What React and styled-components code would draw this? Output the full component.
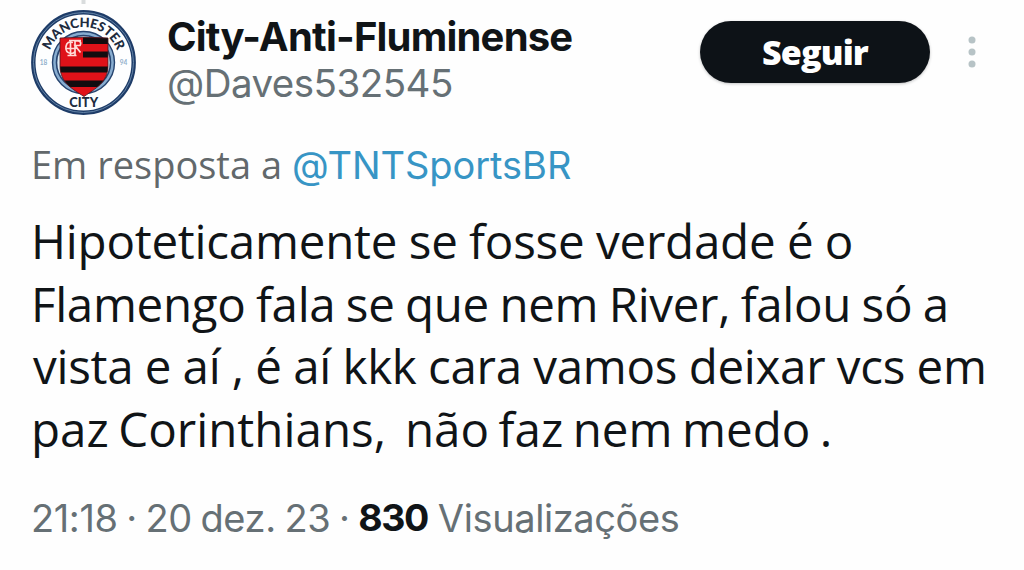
import React from "react";
import styled, { createGlobalStyle } from "styled-components";

const Global = createGlobalStyle`
  body { margin: 0; background: #fefefe; }
  * { box-sizing: border-box; }
`;

const Post = styled.article`
  width: 1024px;
  height: 570px;
  padding: 0 32px 0 31px;
  overflow: hidden;
  background: #fefefe;
  color: #101417;
  font-family: "Open Sans", "Noto Sans", sans-serif;
`;

const Header = styled.header`
  display: flex;
  align-items: flex-start;
  height: 140px;
`;

const Avatar = styled.svg`
  flex: none;
  display: block;
  width: 105px;
  height: 116px;
`;

const Identity = styled.div`
  flex: 1;
  padding: 13px 0 0 31px;
  font-family: Inter, sans-serif;
  white-space: nowrap;
`;

const Name = styled.div`
  font-size: 40px;
  font-weight: 700;
  line-height: 47px;
  letter-spacing: -0.79px;
`;

const Handle = styled.div`
  font-size: 38.5px;
  line-height: 47px;
  letter-spacing: -0.52px;
  color: #667075;
`;

const FollowButton = styled.button`
  width: 230px;
  height: 62px;
  margin-top: 21px;
  padding: 0 0 1px;
  border: 0;
  border-radius: 31px;
  background: #0d1217;
  box-shadow: 0 1px 3px rgba(15, 20, 25, 0.25);
  color: #fff;
  font: 800 34px/60px "Open Sans", sans-serif;
  letter-spacing: -0.85px;
`;

const MenuDots = styled.svg`
  width: 8px;
  height: 32px;
  margin: 36px 16px 0 38px;
  fill: #b7c3c6;
`;

const ReplyLine = styled.div`
  height: 48px;
  font-size: 38px;
  line-height: 48px;
  white-space: nowrap;
  color: #62686b;
`;

const Mention = styled.a`
  font-family: Inter, sans-serif;
  letter-spacing: -0.05px;
  color: #3795c5;
`;

const Body = styled.div`
  margin-top: 22px;
`;

const Line = styled.div`
  height: 62.7px;
  padding-left: ${(p) => p.$indent}px;
  font-size: 47.5px;
  line-height: 62.7px;
  letter-spacing: ${(p) => p.$track}px;
  word-spacing: ${(p) => p.$gap}px;
  white-space: pre;
`;

const Meta = styled.footer`
  display: flex;
  height: 48px;
  margin-top: 33px;
  font-family: Inter, sans-serif;
  font-size: 38px;
  line-height: 48px;
  letter-spacing: -0.4px;
  word-spacing: -1.6px;
  white-space: pre;
  color: #667075;
`;

const Views = styled.strong`
  margin-right: 10px;
  font-size: 37.5px;
  font-weight: 700;
  letter-spacing: -1.4px;
  color: #101417;
`;

const lines = [
  { text: "Hipoteticamente se fosse verdade é o", track: -0.23, gap: -0.6, indent: 0 },
  { text: "Flamengo fala se que nem River, falou só a", track: -0.33, gap: -1.5, indent: 0 },
  { text: "vista e aí , é aí kkk cara vamos deixar vcs em", track: -0.28, gap: -0.6, indent: 2 },
  { text: "paz Corinthians,  não faz nem medo .", track: 0.02, gap: -2.9, indent: 0 },
];

function Crest() {
  return (
    <Avatar viewBox="31 0 105 116">
      <defs>
        <path id="arc" d="M 48 62.5 A 35.5 35.5 0 0 1 119 62.5" />
        <clipPath id="shield">
          <path d="M60 38 Q84 36.5 108 38 V66 C108 82 95 89 84 96.5 C72 89 60 82 60 66 Z" />
        </clipPath>
      </defs>
      <path d="M83.5 0v4" stroke="#d9dcdd" strokeWidth="4" />
      <circle cx="83.5" cy="62.5" r="50.2" fill="#fdfeff" stroke="#1e3c68" strokeWidth="4.4" />
      <circle cx="83.5" cy="62.5" r="50" fill="none" stroke="#6585a8" strokeWidth="1" />
      <circle cx="83.5" cy="62.5" r="31" fill="#88add0" stroke="#26446f" strokeWidth="1.4" />
      <circle cx="83.5" cy="62.5" r="27" fill="#dcebf5" stroke="#284671" strokeWidth="1.6" />
      <g clipPath="url(#shield)">
        <path d="M58 36h52v62H58z" fill="#df1219" />
        <path
          d="M83 36h27v8H83zM83 51.5h27v6H83zM58 66.5h52v6H58zM58 80.5h52v6.5H58z"
          fill="#120c0f"
        />
      </g>
      <path
        d="M60 38 Q84 36.5 108 38 V66 C108 82 95 89 84 96.5 C72 89 60 82 60 66 Z"
        fill="none"
        stroke="#4a1620"
        strokeWidth="0.8"
      />
      <g fill="none" stroke="#ffdcd8" strokeWidth="1.7">
        <path d="M73 42.5q-6-2-7 4t5 7q3 0 4-2" />
        <path d="M70.500 55.5v-15M75 55V41h3.500q3.500 1 1.500 4.500h-5l5.500 7M66 48.500h9M69 40.500h12M67.500 55.500h9" />
      </g>
      <text fontFamily="Lato, sans-serif" fontSize="13" fontWeight="900" fill="#202b3e" textAnchor="middle">
        <textPath href="#arc" startOffset="50%" textLength="87">MANCHESTER</textPath>
      </text>
      <text x="83.7" y="106.5" fontFamily="Lato, sans-serif" fontSize="12.800" fontWeight="900" fill="#202b3e" textAnchor="middle" textLength="29">CITY</text>
      <g fontFamily="Lato, sans-serif" fontSize="6.500" fontWeight="700" fill="#91b0cc" textAnchor="middle">
        <text x="43.500" y="65">18</text>
        <text x="123.500" y="65">94</text>
      </g>
    </Avatar>
  );
}

export default function App() {
  return (
    <Post>
      <Global />
      <Header>
        <Crest />
        <Identity>
          <Name>City-Anti-Fluminense</Name>
          <Handle>@Daves532545</Handle>
        </Identity>
        <FollowButton>Seguir</FollowButton>
        <MenuDots viewBox="0 0 8 32">
          <circle cx="4" cy="4" r="3.500" />
          <circle cx="4" cy="16" r="3.500" />
          <circle cx="4" cy="28" r="3.500" />
        </MenuDots>
      </Header>
      <ReplyLine>
        Em resposta a <Mention>@TNTSportsBR</Mention>
      </ReplyLine>
      <Body>
        {lines.map((l) => (
          <Line key={l.text} $track={l.track} $gap={l.gap} $indent={l.indent}>
            {l.text}
          </Line>
        ))}
      </Body>
      <Meta>
        <span>21:18 · 20 dez. 23 · </span>
        <Views>830</Views>
        <span>Visualizações</span>
      </Meta>
    </Post>
  );
}
